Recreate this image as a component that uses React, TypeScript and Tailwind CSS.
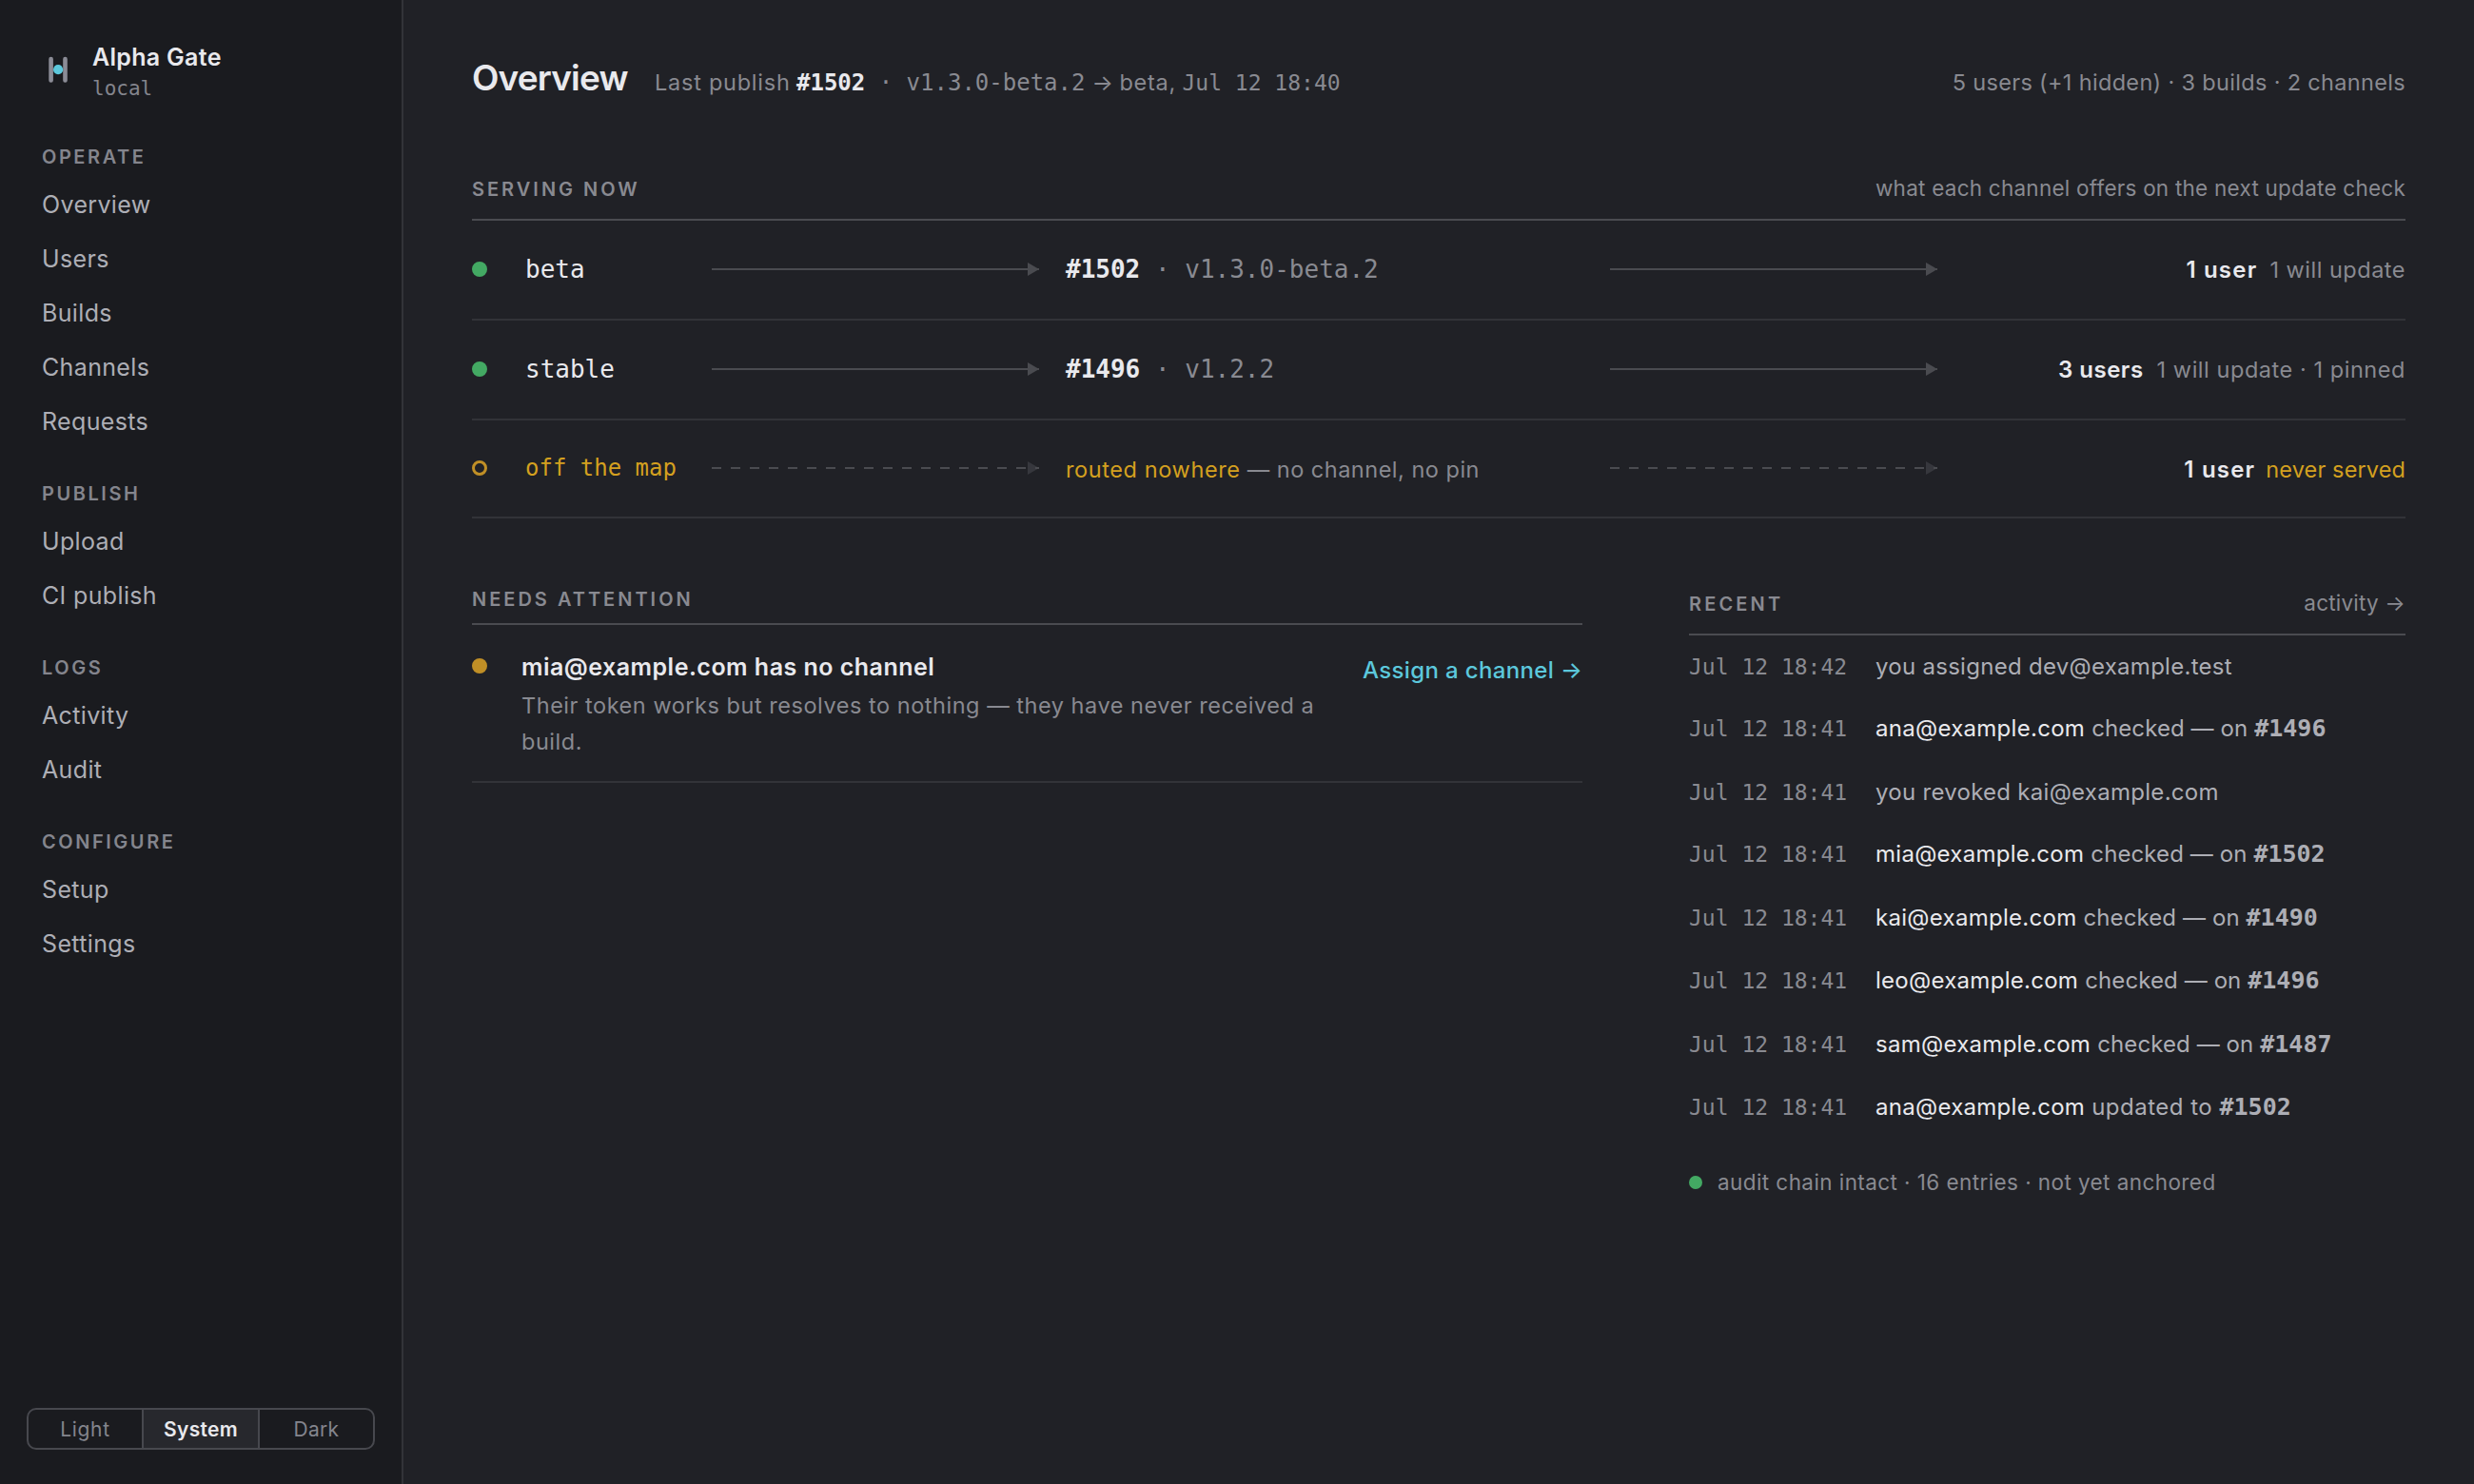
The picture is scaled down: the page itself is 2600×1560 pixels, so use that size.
import React from "react";
import clsx from "clsx";

const MONO = "font-['DejaVu_Sans_Mono','Liberation_Mono',monospace]";

const NAV = [
  { label: "OPERATE", items: ["Overview", "Users", "Builds", "Channels", "Requests"] },
  { label: "PUBLISH", items: ["Upload", "CI publish"] },
  { label: "LOGS", items: ["Activity", "Audit"] },
  { label: "CONFIGURE", items: ["Setup", "Settings"] },
];

function Logo() {
  return (
    <svg className="mb-1.5 h-8 w-8" viewBox="0 0 32 32" fill="none">
      <path d="M9.6 5v22.4M24.5 5v22.4" stroke="#8b8c96" strokeWidth="4.6" strokeLinecap="round" />
      <circle cx="17.1" cy="16.2" r="5.1" fill="#5cc8dc" />
    </svg>
  );
}

function Sidebar() {
  return (
    <aside className="flex w-[424px] shrink-0 flex-col border-r-2 border-[#323338] bg-[#1a1b1f] pt-[43px] pb-9">
      <div className="mb-10 flex items-center gap-[21px] pl-11">
        <Logo />
        <div>
          <div className="h-[34px] text-[25px] leading-[34px] font-semibold tracking-[0.3px] text-[#e9e9ed]">Alpha Gate</div>
          <div className={clsx(MONO, "text-[21px] leading-8 text-[#84858d]")}>local</div>
        </div>
      </div>
      <nav className="flex flex-1 flex-col gap-[31px] pl-11">
        {NAV.map((g) => (
          <div key={g.label}>
            <div className="mb-1.5 text-[20px] leading-8 font-semibold tracking-[2.55px] text-[#84858d]">{g.label}</div>
            {g.items.map((i) => (
              <a key={i} className="block text-[25px] leading-[57px] tracking-[0.35px] text-[#adaeb5]">{i}</a>
            ))}
          </div>
        ))}
      </nav>
      <div className="mx-7 grid h-11 grid-cols-[119px_124px_119px] overflow-hidden rounded-[10px] border-2 border-[#47484e] text-center text-[21px] leading-[42px] tracking-[0.3px] text-[#84858d]">
        <button className="tracking-[0.65px]">Light</button>
        <button className="border-x-2 border-[#47484e] bg-[#27282d] font-semibold text-[#e9e9ed]">System</button>
        <button>Dark</button>
      </div>
    </aside>
  );
}

function Arrow({ dashed = false }: { dashed?: boolean }) {
  return (
    <svg className="mb-px h-3.5 w-[344px]" viewBox="0 0 344 14" fill="none">
      <path d="M0 7H344" stroke="#4a4b50" strokeWidth="2" strokeDasharray={dashed ? "10 10" : undefined} />
      <path d="M332 0L344 7L332 14Z" fill={dashed ? "#36373d" : "#4a4b50"} />
      {dashed && <path d="M340 7H344" stroke="#4a4b50" strokeWidth="2" />}
    </svg>
  );
}

function ServingRow({
  className,
  dot,
  name,
  off,
  children,
  right,
}: {
  className: string;
  dot: string;
  name: string;
  off?: boolean;
  children: React.ReactNode;
  right: React.ReactNode;
}) {
  return (
    <div className={clsx("grid grid-cols-[28px_168px_344px_544px_344px_464px] items-center gap-x-7 border-b-2 border-[#323338]", className)}>
      <span className={clsx("mb-px size-4 rounded-full", dot)} />
      <span className={clsx(MONO, "mb-0.5 leading-9 whitespace-nowrap", off ? "text-[24px] text-[#d4a01f]" : "text-[26px] text-[#e9e9ed]")}>{name}</span>
      <Arrow dashed={off} />
      <div className="whitespace-nowrap">{children}</div>
      <Arrow dashed={off} />
      <div className={clsx("flex items-baseline justify-end text-[23.5px] leading-9 whitespace-nowrap text-[#898a91]", off && "mt-0.5")}>{right}</div>
    </div>
  );
}

function Build({ id, version }: { id: string; version: string }) {
  return (
    <div className={clsx(MONO, "mb-0.5 text-[26px] leading-9 text-[#898a91]")}>
      <b className="font-bold text-[#e9e9ed]">{id}</b> · {version}
    </div>
  );
}

const RECENT: { h: string; time: string; who?: string; text: string; build?: string }[] = [
  { h: "h-[65px]", time: "Jul 12 18:42", text: "you assigned dev@example.test" },
  { h: "h-[67px]", time: "Jul 12 18:41", who: "ana@example.com", text: "checked — on", build: "#1496" },
  { h: "h-[65px]", time: "Jul 12 18:41", text: "you revoked kai@example.com" },
  { h: "h-[67px]", time: "Jul 12 18:41", who: "mia@example.com", text: "checked — on", build: "#1502" },
  { h: "h-[66px]", time: "Jul 12 18:41", who: "kai@example.com", text: "checked — on", build: "#1490" },
  { h: "h-[67px]", time: "Jul 12 18:41", who: "leo@example.com", text: "checked — on", build: "#1496" },
  { h: "h-[66px]", time: "Jul 12 18:41", who: "sam@example.com", text: "checked — on", build: "#1487" },
  { h: "h-[66px]", time: "Jul 12 18:41", who: "ana@example.com", text: "updated to", build: "#1502" },
];

export default function App() {
  return (
    <div className="flex h-[1560px] w-[2600px] overflow-hidden bg-[#202126] font-['Inter',sans-serif] text-[#898a91]">
      <Sidebar />
      <main className="flex-1 pt-[58px] pr-[72px] pl-[72px]">
        <header className="flex h-12 items-baseline whitespace-nowrap">
          <h1 className="w-48 text-[37px] leading-[48px] font-semibold tracking-[-0.85px] text-[#e9e9ed]">Overview</h1>
          <p className="flex items-baseline text-[23.5px] tracking-[0.75px]">
            <span className="w-[149px]">Last publish</span>
            <span className={clsx(MONO, "text-[24px] tracking-normal")}>
              <b className="font-bold text-[#e9e9ed]">#1502</b> · v1.3.0-beta.2
            </span>
            <span className="ml-[7px] w-[29px] tracking-normal">→</span>
            <span className="w-[66px]">beta,</span>
            <span className={clsx(MONO, "text-[23px] tracking-normal")}>Jul 12 18:40</span>
          </p>
          <p className="ml-auto text-[23.5px] tracking-[0.33px]">5 users (+1 hidden) · 3 builds · 2 channels</p>
        </header>

        <section className="mt-[74px]">
          <div className="flex items-baseline justify-between border-b-2 border-[#4a4b50] pb-[13px] leading-9">
            <h2 className="text-[20px] font-semibold tracking-[3px]">SERVING NOW</h2>
            <span className="text-[22.5px] tracking-[0.24px]">what each channel offers on the next update check</span>
          </div>
          <ServingRow
            className="h-[105px]"
            dot="bg-[#43a963]"
            name="beta"
            right={
              <>
                <b className="mr-[13px] text-[24px] font-semibold tracking-[1.2px] text-[#e9e9ed]">1 user</b>
                <span className="tracking-[0.5px]">1 will update</span>
              </>
            }
          >
            <Build id="#1502" version="v1.3.0-beta.2" />
          </ServingRow>
          <ServingRow
            className="h-[105px]"
            dot="bg-[#43a963]"
            name="stable"
            right={
              <>
                <b className="mr-3.5 text-[24px] font-semibold tracking-[0.5px] text-[#e9e9ed]">3 users</b>
                <span className="tracking-[0.55px]">1 will update · 1 pinned</span>
              </>
            }
          >
            <Build id="#1496" version="v1.2.2" />
          </ServingRow>
          <ServingRow
            className="h-[103px]"
            dot="border-[3px] border-[#c08f26]"
            name="off the map"
            off
            right={
              <>
                <b className="mr-[11px] text-[24px] font-semibold tracking-[1.2px] text-[#e9e9ed]">1 user</b>
                <span className="tracking-[0.12px] text-[#d4a01f]">never served</span>
              </>
            }
          >
            <div className="mt-0.5 text-[23.5px] leading-9 tracking-[0.5px]">
              <span className="tracking-[0.6px] text-[#d4a01f]">routed nowhere</span> — no channel, no pin
            </div>
          </ServingRow>
        </section>

        <div className="mt-[69px] grid grid-cols-[1167px_753px] gap-x-28">
          <section>
            <h2 className="border-b-2 border-[#4a4b50] pb-[9px] text-[20px] leading-8 font-semibold tracking-[3px]">NEEDS ATTENTION</h2>
            <div className="flex items-start border-b-2 border-[#323338] pt-6 pb-[23px]">
              <span className="mt-[11px] mr-9 size-4 shrink-0 rounded-full bg-[#c08f26]" />
              <div className="mr-7 min-w-0 flex-1">
                <div className="text-[25px] leading-10 font-semibold tracking-[0.48px] text-[#e9e9ed]">mia@example.com has no channel</div>
                <p className="mt-0.5 text-[23.5px] leading-[37.5px] tracking-[0.53px]">
                  Their token works but resolves to nothing — they have never received a build.
                </p>
              </div>
              <a className="mt-1.5 flex text-[24px] leading-9 font-medium text-[#5cc8dc]">
                <span className="tracking-[0.35px]">Assign a channel</span>
                <span className="ml-[7px]">→</span>
              </a>
            </div>
          </section>

          <section className="pt-0.5">
            <div className="flex items-baseline justify-between border-b-2 border-[#4a4b50] pb-[13px] leading-9">
              <h2 className="text-[20px] font-semibold tracking-[3.15px]">RECENT</h2>
              <a className="text-[22.5px] tracking-[0.2px]">activity →</a>
            </div>
            <ul>
              {RECENT.map((r, i) => (
                <li key={i} className={clsx("flex items-baseline pt-[13px] leading-10 whitespace-nowrap", r.h)}>
                  <span className={clsx(MONO, "w-[196px] text-[23px]")}>{r.time}</span>
                  <span className="text-[24px] tracking-[0.28px] text-[#adaeb5]">
                    {r.who && <span className="text-[#e9e9ed]">{r.who} </span>}
                    <span className={clsx(r.text === "checked — on" && "tracking-[0.1px]", r.text === "updated to" && "tracking-[0.5px]")}>
                      {r.text}
                      {r.build && " "}
                    </span>
                    {r.build && <b className={clsx(MONO, "text-[25px] font-bold tracking-normal")}>{r.build}</b>}
                  </span>
                </li>
              ))}
            </ul>
            <div className="mt-7 flex items-center gap-4 text-[22.5px] leading-9 tracking-[0.42px]">
              <span className="size-3.5 rounded-full bg-[#43a963]" />
              audit chain intact · 16 entries · not yet anchored
            </div>
          </section>
        </div>
      </main>
    </div>
  );
}
